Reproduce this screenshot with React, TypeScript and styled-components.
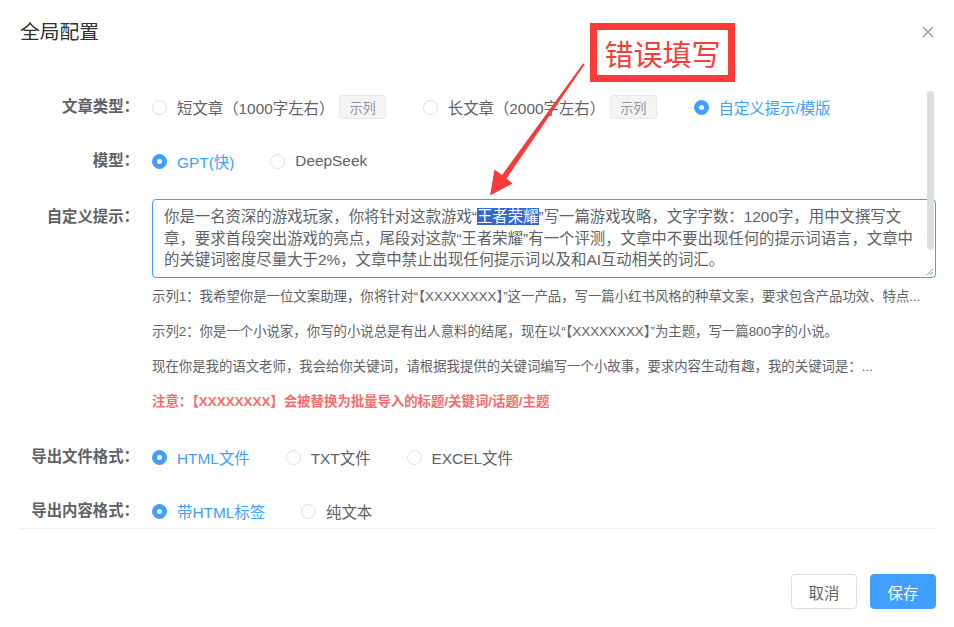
import React from 'react';
import styled, { createGlobalStyle } from 'styled-components';

const GlobalStyle = createGlobalStyle`
  html, body {
    margin: 0;
    padding: 0;
    background: #ffffff;
  }
  body {
    font-family: "Liberation Sans", "Noto Sans CJK SC", sans-serif;
  }
  * {
    box-sizing: border-box;
  }
`;

const Dialog = styled.div`
  position: relative;
  width: 954px;
  height: 627px;
  background: #ffffff;
  display: flex;
  flex-direction: column;
  overflow: hidden;
`;

const Header = styled.div`
  display: flex;
  align-items: center;
  justify-content: space-between;
  padding: 20px 20px 10px 20px;
`;

const Title = styled.span`
  font-size: 19.8px;
  line-height: 24px;
  color: #303133;
`;

const CloseButton = styled.button`
  width: 12px;
  height: 12px;
  padding: 0;
  border: none;
  background: transparent;
  display: flex;
  cursor: pointer;
`;

const Body = styled.div`
  position: relative;
  height: 475px;
  margin: 0 18px 0 20px;
  padding-top: 37px;
  border-bottom: 1px solid #ebeef5;
  overflow: hidden;
`;

const ScrollThumb = styled.div`
  position: absolute;
  top: 37px;
  right: 2px;
  width: 7px;
  height: 159px;
  border-radius: 4px;
  background: #dddee0;
`;

const FormItem = styled.div`
  display: flex;
  align-items: flex-start;
  margin-bottom: 22px;
`;

const Label = styled.div<{ $lh?: number }>`
  width: 119px;
  flex-shrink: 0;
  text-align: right;
  font-size: 15.4px;
  font-weight: bold;
  line-height: ${(p) => p.$lh ?? 32}px;
  color: #606266;
  white-space: nowrap;
`;

const Content = styled.div`
  flex: 1;
  min-width: 0;
  margin-left: 13px;
`;

const RadioGroup = styled.div`
  display: flex;
  align-items: center;
  height: 32px;
`;

const RadioItem = styled.label<{ $gap?: number }>`
  display: inline-flex;
  align-items: center;
  margin-right: ${(p) => p.$gap ?? 36}px;
  cursor: pointer;
`;

const Circle = styled.span<{ $checked?: boolean }>`
  position: relative;
  width: 15px;
  height: 15px;
  flex-shrink: 0;
  border-radius: 50%;
  border: 1px solid ${(p) => (p.$checked ? '#409eff' : '#dcdfe6')};
  background: ${(p) => (p.$checked ? '#409eff' : '#ffffff')};

  &::after {
    content: '';
    display: ${(p) => (p.$checked ? 'block' : 'none')};
    position: absolute;
    left: 50%;
    top: 50%;
    width: 5px;
    height: 5px;
    margin: -2.5px 0 0 -2.5px;
    border-radius: 50%;
    background: #ffffff;
  }
`;

const RadioText = styled.span<{ $checked?: boolean }>`
  padding-left: 10px;
  font-size: 15.4px;
  color: ${(p) => (p.$checked ? '#409eff' : '#606266')};
  white-space: nowrap;
`;

const ExampleButton = styled.button`
  height: 24px;
  padding: 0 9px;
  margin: 0 37px 0 5px;
  font-family: inherit;
  font-size: 13.2px;
  color: #909399;
  background: #f4f4f5;
  border: 1px solid #e9e9eb;
  border-radius: 3px;
  cursor: pointer;
`;

const PromptBox = styled.div`
  position: relative;
  height: 79px;
  padding: 6px 11px;
  border: 1px solid #409eff;
  border-radius: 4px;
  font-size: 15.4px;
  line-height: 21.7px;
  color: #606266;
`;

const PromptLine = styled.span`
  display: block;
  white-space: nowrap;
`;

const Selected = styled.span`
  background: #3367d6;
  color: #ffffff;
`;

const ResizeGrip = styled.svg`
  position: absolute;
  right: 1px;
  bottom: 1px;
`;

const Hints = styled.div`
  margin-top: 1px;
`;

const Hint = styled.div<{ $warn?: boolean }>`
  font-size: 13.4px;
  line-height: 35px;
  color: ${(p) => (p.$warn ? '#f56c6c' : '#606266')};
  font-weight: ${(p) => (p.$warn ? 'bold' : 'normal')};
  white-space: nowrap;
`;

const Footer = styled.div`
  display: flex;
  justify-content: flex-end;
  gap: 13px;
  padding: 45px 18px 0 20px;
`;

const Button = styled.button<{ $primary?: boolean }>`
  width: 66px;
  height: 35px;
  padding: 0;
  font-family: inherit;
  font-size: 15.4px;
  border-radius: 4px;
  border: 1px solid ${(p) => (p.$primary ? '#409eff' : '#dcdfe6')};
  background: ${(p) => (p.$primary ? '#409eff' : '#ffffff')};
  color: ${(p) => (p.$primary ? '#ffffff' : '#606266')};
  cursor: pointer;
`;

const Callout = styled.div`
  position: absolute;
  left: 590px;
  top: 23px;
  width: 145px;
  height: 59px;
  border: 7px solid #fb3a3a;
  background: #ffffff;
  display: flex;
  align-items: center;
  justify-content: center;
  font-size: 29px;
  color: #f53c3c;
`;

const ArrowLayer = styled.svg`
  position: absolute;
  left: 0;
  top: 0;
  pointer-events: none;
`;

type Option = { label: string; checked?: boolean; example?: boolean; gap?: number };

const Radios = ({ options }: { options: Option[] }) => (
  <RadioGroup>
    {options.map((o) => (
      <React.Fragment key={o.label}>
        <RadioItem $gap={o.example ? 0 : o.gap}>
          <Circle $checked={o.checked} />
          <RadioText $checked={o.checked}>{o.label}</RadioText>
        </RadioItem>
        {o.example && <ExampleButton>示列</ExampleButton>}
      </React.Fragment>
    ))}
  </RadioGroup>
);

export default function App() {
  return (
    <Dialog>
      <GlobalStyle />
      <Header>
        <Title>全局配置</Title>
        <CloseButton aria-label="关闭">
          <svg width="12" height="12" viewBox="0 0 12 12">
            <path d="M1 1 L11 11 M11 1 L1 11" stroke="#909399" strokeWidth="1.2" fill="none" />
          </svg>
        </CloseButton>
      </Header>

      <Body>
        <FormItem>
          <Label>文章类型：</Label>
          <Content>
            <Radios
              options={[
                { label: '短文章（1000字左右）', example: true },
                { label: '长文章（2000字左右）', example: true },
                { label: '自定义提示/模版', checked: true },
              ]}
            />
          </Content>
        </FormItem>

        <FormItem>
          <Label>模型：</Label>
          <Content>
            <Radios
              options={[
                { label: 'GPT(快)', checked: true },
                { label: 'DeepSeek' },
              ]}
            />
          </Content>
        </FormItem>

        <FormItem>
          <Label $lh={36}>自定义提示：</Label>
          <Content>
            <PromptBox>
              <PromptLine>
                你是一名资深的游戏玩家，你将针对这款游戏“<Selected>王者荣耀</Selected>”写一篇游戏攻略，文字字数：1200字，用中文撰写文
              </PromptLine>
              <PromptLine>
                章，要求首段突出游戏的亮点，尾段对这款“王者荣耀”有一个评测，文章中不要出现任何的提示词语言，文章中
              </PromptLine>
              <PromptLine>的关键词密度尽量大于2%，文章中禁止出现任何提示词以及和AI互动相关的词汇。</PromptLine>
              <ResizeGrip width="8" height="8" viewBox="0 0 8 8">
                <path d="M1 7 L7 1 M4 7 L7 4" stroke="#7a7a7a" strokeWidth="0.8" fill="none" />
              </ResizeGrip>
            </PromptBox>
            <Hints>
              <Hint>示列1：我希望你是一位文案助理，你将针对“【XXXXXXXX】”这一产品，写一篇小红书风格的种草文案，要求包含产品功效、特点...</Hint>
              <Hint>示列2：你是一个小说家，你写的小说总是有出人意料的结尾，现在以“【XXXXXXXX】”为主题，写一篇800字的小说。</Hint>
              <Hint>现在你是我的语文老师，我会给你关键词，请根据我提供的关键词编写一个小故事，要求内容生动有趣，我的关键词是：...</Hint>
              <Hint $warn>注意：【XXXXXXXX】会被替换为批量导入的标题/关键词/话题/主题</Hint>
            </Hints>
          </Content>
        </FormItem>

        <FormItem>
          <Label>导出文件格式：</Label>
          <Content>
            <Radios
              options={[
                { label: 'HTML文件', checked: true },
                { label: 'TXT文件' },
                { label: 'EXCEL文件' },
              ]}
            />
          </Content>
        </FormItem>

        <FormItem>
          <Label>导出内容格式：</Label>
          <Content>
            <Radios
              options={[
                { label: '带HTML标签', checked: true },
                { label: '纯文本' },
              ]}
            />
          </Content>
        </FormItem>

        <ScrollThumb />
      </Body>

      <Footer>
        <Button>取消</Button>
        <Button $primary>保存</Button>
      </Footer>

      <Callout>错误填写</Callout>
      <ArrowLayer width="954" height="627" viewBox="0 0 954 627">
        <polygon
          points="583.2,63.2 584.6,64.6 506.5,178.5 512.5,183.5 490,195.5 494.5,169.5 502,175"
          fill="#f53c3c"
        />
      </ArrowLayer>
    </Dialog>
  );
}
